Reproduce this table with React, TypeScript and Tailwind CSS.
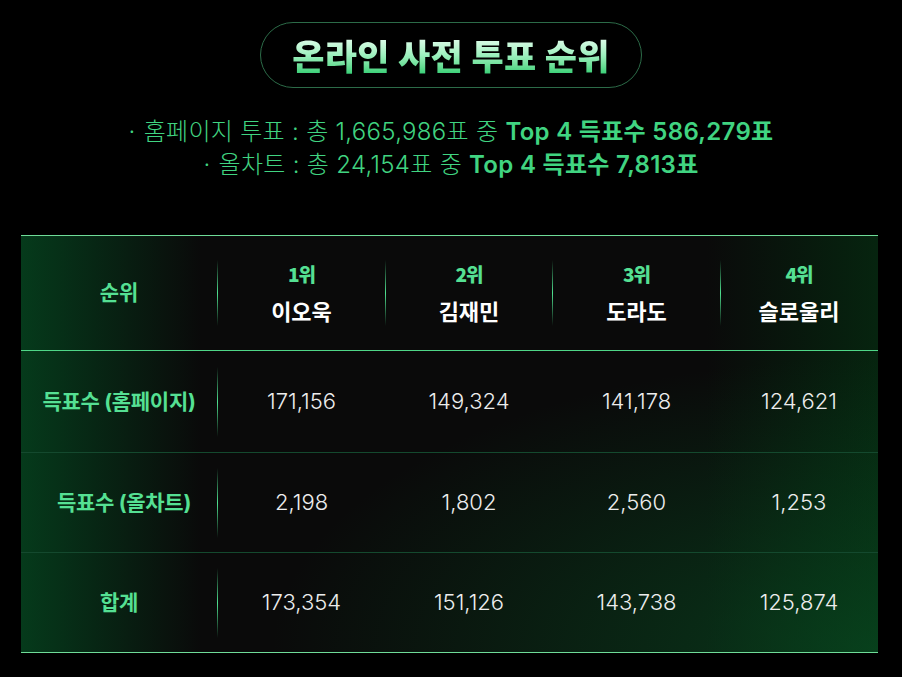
const font = "font-['Inter','Noto_Sans_CJK_KR',sans-serif]"

const candidates = [
    { rank: '1위', name: '이오욱' },
    { rank: '2위', name: '김재민' },
    { rank: '3위', name: '도라도' },
    { rank: '4위', name: '슬로울리' },
]

const rows = [
    { label: '득표수 (홈페이지)', values: ['171,156', '149,324', '141,178', '124,621'], h: 'h-[102px]', pad: '' },
    { label: '득표수 (올차트)', values: ['2,198', '1,802', '2,560', '1,253'], h: 'h-[100px]', pad: 'pl-[10px]' },
    { label: '합계', values: ['173,354', '151,126', '143,738', '125,874'], h: 'h-[99px]', pad: '' },
]

const widths = ['w-[167px]', 'w-[166px]', 'w-[167px]', 'w-[156px]']

function Divider({ visible = true, tall = false }: { visible?: boolean; tall?: boolean }) {
    return (
        <div
            className={`w-px self-center ${tall ? 'h-[70px]' : 'h-[66px]'} ${visible ? 'bg-gradient-to-b from-transparent via-[#4fe08f] to-transparent' : ''}`}
        />
    )
}

export default function App() {
    return (
        <div className={`w-[902px] h-[677px] bg-black ${font} flex flex-col`}>
            <div className="flex justify-center pt-[22px]">
                <div className="w-[382px] h-[66px] rounded-full border border-[#2c6b48] flex items-center justify-center">
                    <h1 className="text-[35px] font-black tracking-[0.3px] leading-none pb-[2px] bg-gradient-to-b from-[#e4fdee] via-[#9bf0bd] to-[#34cf76] bg-clip-text text-transparent font-['Noto_Sans_CJK_KR',sans-serif]">
                        온라인 사전 투표 순위
                    </h1>
                </div>
            </div>

            <div className="mt-[27px] flex flex-col items-center text-[#40d481] text-[24px] leading-[33px] tracking-[0.3px]">
                <p className="font-light">
                    <span className="mr-[8px]">·</span>홈페이지 투표 : 총 1,665,986표 중{' '}
                    <span className="font-semibold">Top 4 득표수 586,279표</span>
                </p>
                <p className="font-light">
                    <span className="mr-[8px]">·</span>올차트 : 총 24,154표 중{' '}
                    <span className="font-semibold">Top 4 득표수 7,813표</span>
                </p>
            </div>

            <div className="ml-[21px] mt-[54px] w-[857px] border-t border-b border-[#6fdc98] bg-[linear-gradient(90deg,#053a1b_0%,#0a0a0a_21%,#0a0a0a_80%,#06240f_100%)] relative overflow-hidden">
                <div className="absolute inset-0 bg-[radial-gradient(ellipse_at_100%_100%,rgba(8,80,35,0.65)_0%,rgba(8,80,35,0)_50%)] pointer-events-none" />
                <div className="relative">
                    <div className="flex h-[115px] border-b border-[#4fd687]">
                        <div className="w-[196px] flex items-center justify-center text-[21px] font-bold text-[#55e093]">순위</div>
                        {candidates.map((c, i) => (
                            <div key={c.rank} className="flex">
                                <Divider />
                                <div className={`${widths[i]} flex flex-col items-center justify-center gap-[11px]`}>
                                    <span className="text-[19px] font-black text-[#55e093] tracking-[-1px] leading-[26px] font-['Noto_Sans_CJK_KR',sans-serif]">{c.rank}</span>
                                    <span className="text-[22px] font-bold text-white leading-[28px]">{c.name}</span>
                                </div>
                            </div>
                        ))}
                    </div>
                    {rows.map((r, ri) => (
                        <div
                            key={r.label}
                            className={`flex ${r.h} ${ri < rows.length - 1 ? 'border-b border-[#14492e]' : ''}`}
                        >
                            <div className={`w-[196px] flex items-center justify-center text-[21px] font-bold text-[#55e093] tracking-[-0.3px] ${r.pad}`}>{r.label}</div>
                            {r.values.map((v, i) => (
                                <div key={i} className="flex">
                                    <Divider visible={i === 0} tall />
                                    <div className={`${widths[i]} flex items-center justify-center text-[22px] font-light text-[#ededed]`}>{v}</div>
                                </div>
                            ))}
                        </div>
                    ))}
                </div>
            </div>
        </div>
    )
}
